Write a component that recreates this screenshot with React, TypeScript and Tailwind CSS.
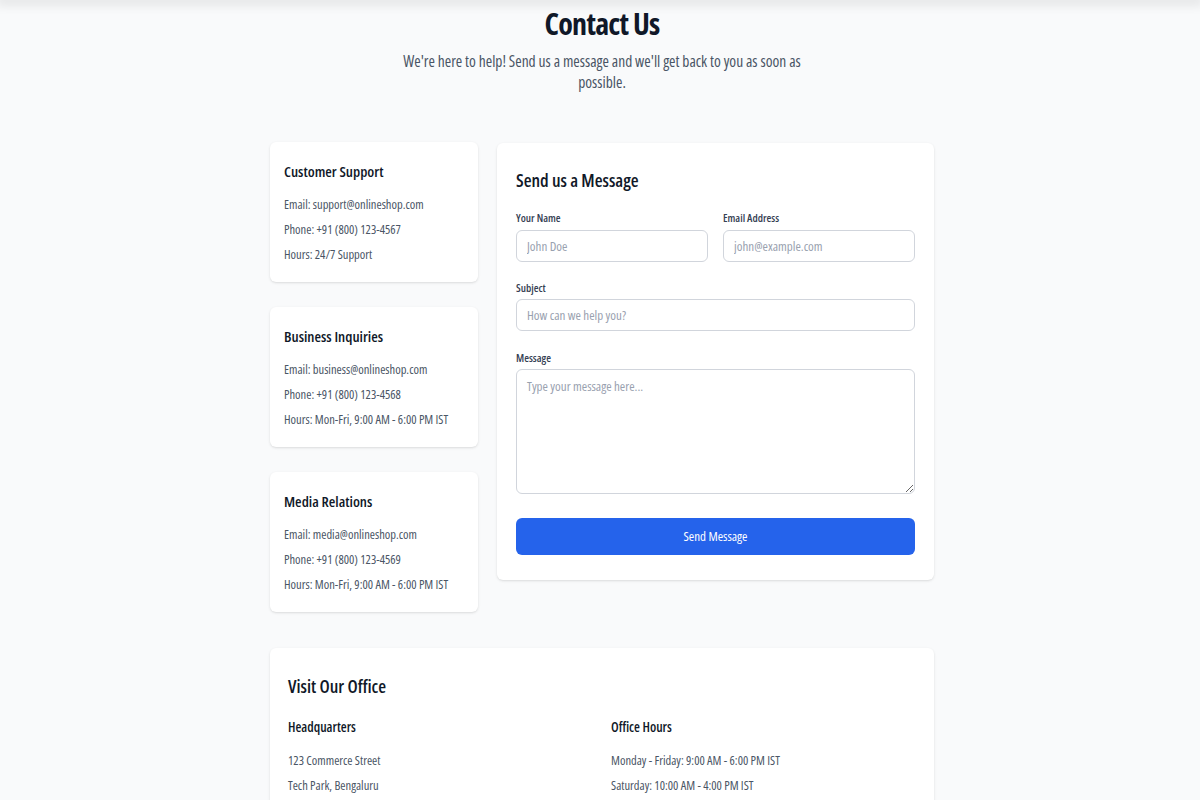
import React from 'react'

const SUPPORT_CARDS = [
  {
    title: 'Customer Support',
    lines: ['Email: support@onlineshop.com', 'Phone: +91 (800) 123-4567', 'Hours: 24/7 Support'],
  },
  {
    title: 'Business Inquiries',
    lines: ['Email: business@onlineshop.com', 'Phone: +91 (800) 123-4568', 'Hours: Mon-Fri, 9:00 AM - 6:00 PM IST'],
  },
  {
    title: 'Media Relations',
    lines: ['Email: media@onlineshop.com', 'Phone: +91 (800) 123-4569', 'Hours: Mon-Fri, 9:00 AM - 6:00 PM IST'],
  },
]

const inputCls =
  'h-[32px] w-full rounded-md border border-gray-300 px-[10px] text-[13px] placeholder:text-gray-400 outline-none'

export default function App() {
  return (
    <div className="min-h-screen bg-gray-50 font-['Open_Sans','Liberation_Sans',sans-serif] font-stretch-[75%]">
      <div className="h-0 shadow-[0_0_12px_4px_rgba(0,0,0,0.12)]" />

      <div className="mx-auto w-[668px] pb-10 pl-[4px]">
        {/* Heading */}
        <div className="pt-[6px] text-center">
          <h1 className="text-[30px] font-bold leading-9 text-gray-900 tracking-tight">Contact Us</h1>
          <p className="mx-auto mt-[9px] w-[420px] text-[15.5px] leading-[21px] text-gray-600">
            We're here to help! Send us a message and we'll get back to you as soon as possible.
          </p>
        </div>

        <div className="mt-[49px] flex items-start gap-[19px]">
          {/* Contact cards */}
          <div className="flex w-[208px] shrink-0 flex-col gap-[25px]">
            {SUPPORT_CARDS.map((card) => (
              <div key={card.title} className="h-[140px] rounded-md bg-white px-[14px] pt-[19px] shadow-sm">
                <h3 className="text-[15px] font-semibold leading-5 text-gray-900">{card.title}</h3>
                <div className="mt-[11px] flex flex-col">
                  {card.lines.map((line) => (
                    <p key={line} className="text-[12.5px] leading-[25px] text-gray-600">
                      {line}
                    </p>
                  ))}
                </div>
              </div>
            ))}
          </div>

          {/* Form */}
          <div className="mt-[1px] h-[437px] flex-1 rounded-md bg-white px-[19px] pt-[25px] shadow-sm">
            <h2 className="text-[18px] font-semibold leading-6 text-gray-900">Send us a Message</h2>
            <div className="mt-[18px] grid grid-cols-2 gap-[15px]">
              <div>
                <label className="block text-[11px] font-semibold leading-4 text-gray-700">Your Name</label>
                <input placeholder="John Doe" className={`mt-[4px] ${inputCls}`} />
              </div>
              <div>
                <label className="block text-[11px] font-semibold leading-4 text-gray-700">Email Address</label>
                <input placeholder="john@example.com" className={`mt-[4px] ${inputCls}`} />
              </div>
            </div>
            <div className="mt-[18px]">
              <label className="block text-[11px] font-semibold leading-4 text-gray-700">Subject</label>
              <input placeholder="How can we help you?" className={`mt-[3px] ${inputCls}`} />
            </div>
            <div className="mt-[19px]">
              <label className="block text-[11px] font-semibold leading-4 text-gray-700">Message</label>
              <textarea
                placeholder="Type your message here..."
                className="mt-[3px] block h-[125px] w-full rounded-md border border-gray-300 px-[10px] py-[7px] text-[13px] outline-none placeholder:text-gray-400"
              />
            </div>
            <button className="mt-[24px] h-[37px] w-full rounded-md bg-[#2563eb] text-[13px] text-white">
              Send Message
            </button>
          </div>
        </div>

        {/* Office */}
        <div className="mt-[36px] rounded-md bg-white px-[18px] pt-[26px] pb-6 shadow-sm">
          <h2 className="text-[18px] font-semibold leading-6 text-gray-900">Visit Our Office</h2>
          <div className="mt-[19px] grid grid-cols-2 gap-[18px]">
            <div>
              <h3 className="text-[13.5px] font-semibold leading-5 text-gray-900">Headquarters</h3>
              <div className="mt-[11px]">
                <p className="text-[12.5px] leading-[25px] text-gray-600">123 Commerce Street</p>
                <p className="text-[12.5px] leading-[25px] text-gray-600">Tech Park, Bengaluru</p>
                <p className="text-[12.5px] leading-[25px] text-gray-600">Karnataka 560001, India</p>
              </div>
            </div>
            <div>
              <h3 className="text-[13.5px] font-semibold leading-5 text-gray-900">Office Hours</h3>
              <div className="mt-[11px]">
                <p className="text-[12.5px] leading-[25px] text-gray-600">Monday - Friday: 9:00 AM - 6:00 PM IST</p>
                <p className="text-[12.5px] leading-[25px] text-gray-600">Saturday: 10:00 AM - 4:00 PM IST</p>
                <p className="text-[12.5px] leading-[25px] text-gray-600">Sunday: Closed</p>
              </div>
            </div>
          </div>
        </div>
      </div>
    </div>
  )
}
